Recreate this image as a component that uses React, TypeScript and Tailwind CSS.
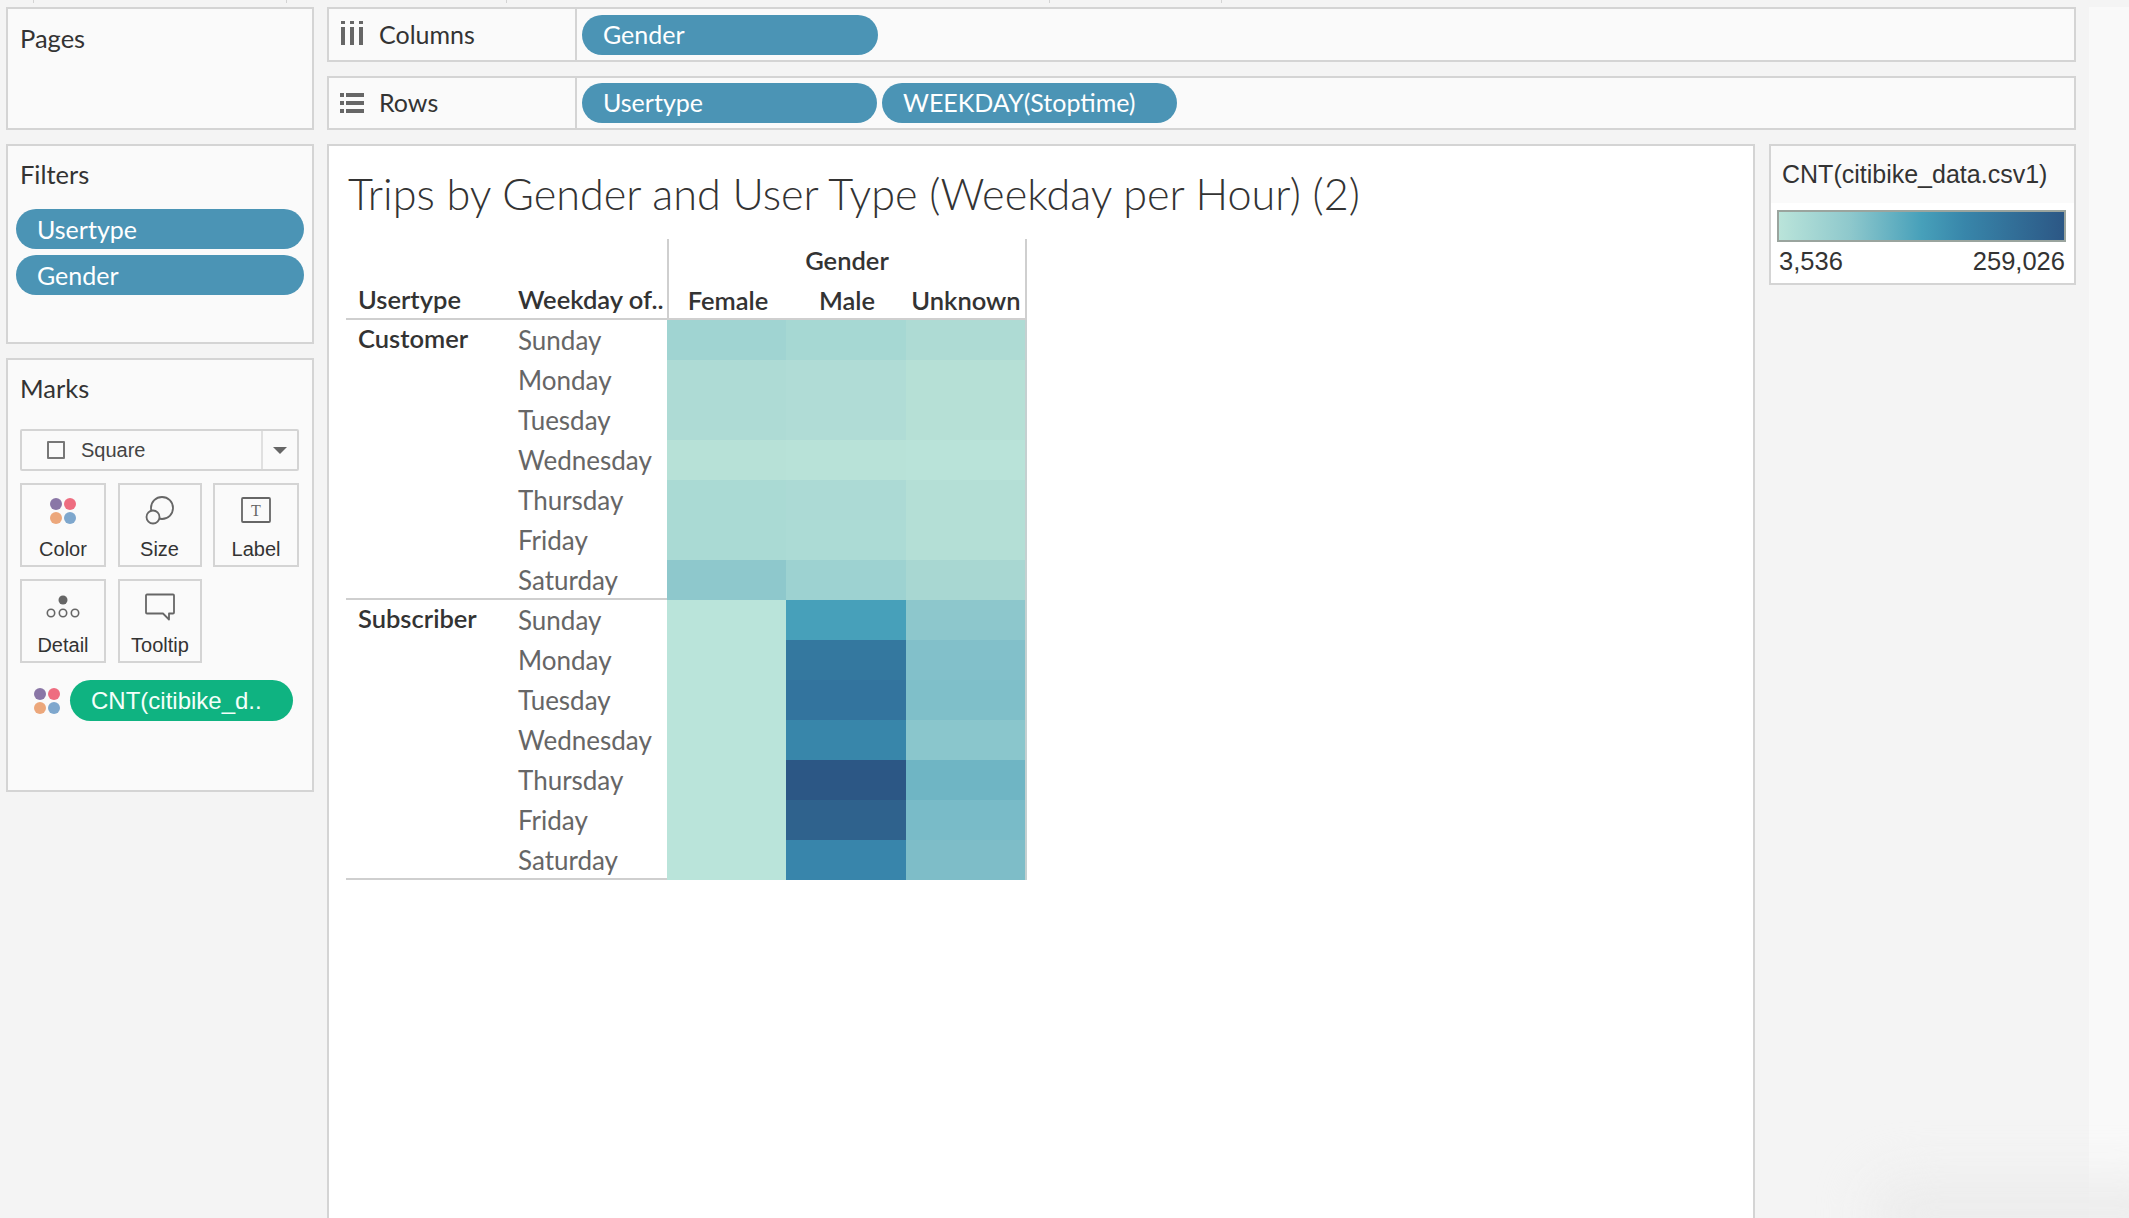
import React from 'react';

const days = ['Sunday', 'Monday', 'Tuesday', 'Wednesday', 'Thursday', 'Friday', 'Saturday'];

const customer = [
  ['#a0d4d2', '#a6d8d3', '#aedbd4'],
  ['#aedbd5', '#b0dcd6', '#b6e0d6'],
  ['#aedbd5', '#b0dcd6', '#b6e0d6'],
  ['#b7e1d7', '#b8e2d8', '#b9e3d9'],
  ['#aadad4', '#acdad5', '#b4dfd6'],
  ['#aadad4', '#acdbd5', '#b4dfd6'],
  ['#8ec8cc', '#9dd2d1', '#a8d7d2'],
];

const subscriber = [
  ['#bae4da', '#47a0ba', '#8dc7cc'],
  ['#bae4da', '#34789f', '#82c0ca'],
  ['#bae4da', '#33749e', '#7fbfc9'],
  ['#bae4da', '#3886aa', '#8ac6cc'],
  ['#bae4da', '#2c5785', '#6fb5c4'],
  ['#bae4da', '#2f628d', '#79bbc8'],
  ['#bae4da', '#3885ab', '#7ebdc8'],
];

const lato = "font-['Lato','Open_Sans',sans-serif]";

function Pill({ label, width }: { label: string; width: string }) {
  return (
    <div className={`flex h-[40px] items-center rounded-full bg-[#4b94b5] pl-[21px] text-[25px] text-white ${width}`}>
      {label}
    </div>
  );
}

function ColorDots({ className }: { className: string }) {
  return (
    <svg viewBox="0 0 28 28" className={className}>
      <circle cx="7" cy="7" r="6" fill="#8a76a6" />
      <circle cx="21" cy="7" r="6" fill="#ee6d80" />
      <circle cx="7" cy="21" r="6" fill="#eca77b" />
      <circle cx="21" cy="21" r="6" fill="#7ea7cd" />
    </svg>
  );
}

function MarkButton({ label, children, width = 'w-[86px]' }: { label: string; children: React.ReactNode; width?: string }) {
  return (
    <div className={`flex h-[84px] flex-col items-center border-2 border-[#d4d4d4] ${width}`}>
      <div className="flex h-[52px] items-center justify-center">{children}</div>
      <span className="text-[20px] leading-[24px] text-[#333]">{label}</span>
    </div>
  );
}

function Shelf({ icon, label, height, children }: { icon: React.ReactNode; label: string; height: string; children: React.ReactNode }) {
  return (
    <div className={`flex border-2 border-[#d4d4d4] bg-[#fafafa] ${height}`}>
      <div className="flex w-[248px] items-center border-r-2 border-[#d4d4d4] pl-[12px]">
        <div className="flex w-[38px] items-center">{icon}</div>
        <span className="text-[25px] text-[#333]">{label}</span>
      </div>
      <div className="flex items-center gap-[5px] pl-[5px]">{children}</div>
    </div>
  );
}

function Section({ name, rows }: { name: string; rows: string[][] }) {
  return (
    <div className="flex h-[280px]">
      <div className="flex w-[321px] border-b-2 border-[#cfcfcf]">
        <div className="w-[172px] pl-[12px] text-[25.5px] font-semibold leading-[36px] text-[#333]">{name}</div>
        <div className="flex flex-col">
          {days.map((d) => (
            <div key={d} className="flex h-[40px] items-center pt-[1px] text-[26px] text-[#666]">
              {d}
            </div>
          ))}
        </div>
      </div>
      <div className="flex flex-col border-r-2 border-[#c4d0d0]">
        {rows.map((r, i) => (
          <div key={i} className="flex h-[40px]">
            <div className="w-[119px]" style={{ background: r[0] }} />
            <div className="w-[120px]" style={{ background: r[1] }} />
            <div className="w-[119px]" style={{ background: r[2] }} />
          </div>
        ))}
      </div>
    </div>
  );
}

export default function App() {
  return (
    <div className={`relative flex h-[1218px] w-[2129px] overflow-hidden bg-[#f4f4f4] ${lato}`}>
      {/* tick marks left over at the top edge */}
      <div className="absolute left-[33px] top-0 h-[3px] w-[1px] bg-[#d4d4d4]" />
      <div className="absolute left-[286px] top-0 h-[3px] w-[1px] bg-[#d4d4d4]" />
      <div className="absolute left-[506px] top-0 h-[3px] w-[1px] bg-[#d4d4d4]" />
      <div className="absolute left-[1049px] top-0 h-[3px] w-[1px] bg-[#d4d4d4]" />
      <div className="absolute left-[1221px] top-0 h-[3px] w-[1px] bg-[#d4d4d4]" />

      {/* left rail */}
      <div className="ml-[6px] mt-[7px] flex w-[308px] flex-col gap-[14px]">
        <div className="h-[123px] border-2 border-[#d4d4d4] bg-[#fafafa] pl-[12px] pt-[10px] text-[25.5px] text-[#333]">Pages</div>
        <div className="h-[200px] border-2 border-[#d4d4d4] bg-[#fafafa] px-[8px]">
          <div className="pl-[4px] pt-[9px] text-[25.5px] text-[#333]">Filters</div>
          <div className="mt-[16px] flex flex-col gap-[6px]">
            <Pill label="Usertype" width="w-full" />
            <Pill label="Gender" width="w-full" />
          </div>
        </div>
        <div className="h-[434px] border-2 border-[#d4d4d4] bg-[#fafafa] px-[12px] font-['Liberation_Sans',sans-serif]">
          <div className={`pt-[9px] text-[25.5px] text-[#333] ${lato}`}>Marks</div>
          <div className="mt-[22px] flex h-[42px] w-[279px] items-center rounded-[2px] border-2 border-[#d4d4d4]">
            <div className="ml-[25px] h-[18px] w-[18px] rounded-[1px] border-2 border-[#777]" />
            <span className="ml-[16px] flex-1 text-[20px] text-[#444]">Square</span>
            <div className="flex h-full w-[36px] items-center justify-center border-l-2 border-[#e0e0e0]">
              <div className="h-0 w-0 border-x-[7px] border-t-[7px] border-x-transparent border-t-[#666]" />
            </div>
          </div>
          <div className="mt-[12px] flex w-[279px] justify-between">
            <MarkButton label="Color">
              <ColorDots className="h-[28px] w-[28px]" />
            </MarkButton>
            <MarkButton label="Size" width="w-[84px]">
              <svg viewBox="0 0 30 30" className="h-[30px] w-[30px]" fill="none" stroke="#666" strokeWidth="1.8">
                <circle cx="17" cy="12" r="11" />
                <circle cx="8" cy="21" r="6.5" fill="#fafafa" />
              </svg>
            </MarkButton>
            <MarkButton label="Label">
              <svg viewBox="0 0 30 28" className="h-[28px] w-[30px]">
                <rect x="1" y="1" width="28" height="24" rx="1" fill="none" stroke="#666" strokeWidth="1.8" />
                <text x="15" y="19" textAnchor="middle" fontSize="16" fill="#666" fontFamily="Liberation Serif">T</text>
              </svg>
            </MarkButton>
          </div>
          <div className="mt-[12px] flex w-[279px] gap-[12px]">
            <MarkButton label="Detail">
              <svg viewBox="0 0 34 24" className="h-[24px] w-[34px]" fill="none" stroke="#666" strokeWidth="1.6">
                <circle cx="17" cy="5" r="4.5" fill="#666" stroke="none" />
                <circle cx="5" cy="18" r="3.7" />
                <circle cx="17" cy="18" r="3.7" />
                <circle cx="29" cy="18" r="3.7" />
              </svg>
            </MarkButton>
            <MarkButton label="Tooltip" width="w-[84px]">
              <svg viewBox="0 0 30 28" className="h-[28px] w-[30px]" fill="none" stroke="#666" strokeWidth="1.8" strokeLinejoin="round">
                <path d="M2 1.5h26a1 1 0 0 1 1 1v17a1 1 0 0 1-1 1h-4v6l-6-6H2a1 1 0 0 1-1-1v-17a1 1 0 0 1 1-1z" />
              </svg>
            </MarkButton>
          </div>
          <div className="mt-[17px] flex items-center pl-[13px]">
            <ColorDots className="h-[28px] w-[28px]" />
            <div className="ml-[9px] flex h-[41px] w-[223px] items-center rounded-full bg-[#0fb381] pl-[21px] text-[24px] text-[#f4fffa]">
              CNT(citibike_d..
            </div>
          </div>
        </div>
      </div>

      {/* centre */}
      <div className="ml-[13px] mt-[7px] flex w-[1749px] flex-col gap-[14px]">
        <Shelf
          label="Columns"
          height="h-[55px]"
          icon={
            <svg viewBox="0 0 22 24" className="mb-[4px] h-[24px] w-[22px]" fill="#666">
              <rect x="0" y="0" width="4" height="3" />
              <rect x="9" y="0" width="4" height="3" />
              <rect x="18" y="0" width="4" height="3" />
              <rect x="0" y="6" width="4" height="18" />
              <rect x="9" y="6" width="4" height="18" />
              <rect x="18" y="6" width="4" height="18" />
            </svg>
          }
        >
          <Pill label="Gender" width="w-[296px]" />
        </Shelf>
        <Shelf
          label="Rows"
          height="h-[54px]"
          icon={
            <svg viewBox="0 0 24 20" className="-ml-[1px] h-[20px] w-[24px]" fill="#666">
              <rect x="0" y="0" width="4" height="4" />
              <rect x="6" y="0" width="18" height="4" />
              <rect x="0" y="8" width="4" height="4" />
              <rect x="6" y="8" width="18" height="4" />
              <rect x="0" y="16" width="4" height="4" />
              <rect x="6" y="16" width="18" height="4" />
            </svg>
          }
        >
          <Pill label="Usertype" width="w-[295px]" />
          <Pill label="WEEKDAY(Stoptime)" width="w-[295px]" />
        </Shelf>

        <div className="flex flex-1 gap-[14px]">
          {/* viz */}
          <div className="w-[1428px] border-x-2 border-t-2 border-[#d4d4d4] bg-white pl-[17px]">
            <div className="pl-[2px] pt-[20px] text-[43.2px] font-light leading-[54px] text-[#333]">
              Trips by Gender and User Type (Weekday per Hour) (2)
            </div>
            <div className="mt-[19px] w-[681px]">
              <div className="flex h-[81px] border-b-2 border-[#cfcfcf] text-[25.5px] font-semibold text-[#333]">
                <div className="flex w-[172px] items-end pl-[12px]">Usertype</div>
                <div className="flex w-[149px] items-end whitespace-nowrap">Weekday of..</div>
                <div className="flex flex-1 flex-col border-x-2 border-[#cfcfcf]">
                  <div className="pt-[2px] text-center">Gender</div>
                  <div className="mt-[2px] flex text-center">
                    <div className="w-[118px]">Female</div>
                    <div className="w-[120px]">Male</div>
                    <div className="w-[118px]">Unknown</div>
                  </div>
                </div>
              </div>
              <Section name="Customer" rows={customer} />
              <Section name="Subscriber" rows={subscriber} />
            </div>
          </div>

          {/* legend */}
          <div className="h-[141px] w-[307px] border-2 border-[#d4d4d4] bg-white font-['Liberation_Sans',sans-serif]">
            <div className="h-[57px] bg-[#fafafa] pl-[11px] pt-[10px] text-[25px] text-[#333]">CNT(citibike_data.csv1)</div>
            <div className="ml-[6px] mr-[8px] mt-[7px] h-[32px] border-2 border-[#9aa49e] bg-[linear-gradient(to_right,#bae4da,#8ec8cc_25%,#47a0ba_50%,#3886aa_65%,#2c5785)]" />
            <div className="ml-[8px] mr-[9px] mt-[3px] flex justify-between text-[25.5px] leading-[32px] text-[#333]">
              <span>3,536</span>
              <span>259,026</span>
            </div>
          </div>
        </div>
      </div>

      {/* right strip */}
      <div className="ml-[13px] mt-[7px] flex-1 bg-[#f9f9f9]" />

      {/* soft shading in the bottom corner */}
      <div className="absolute bottom-[-30px] right-[-60px] h-[70px] w-[320px] rounded-full bg-[#ececec] blur-[24px]" />
    </div>
  );
}
